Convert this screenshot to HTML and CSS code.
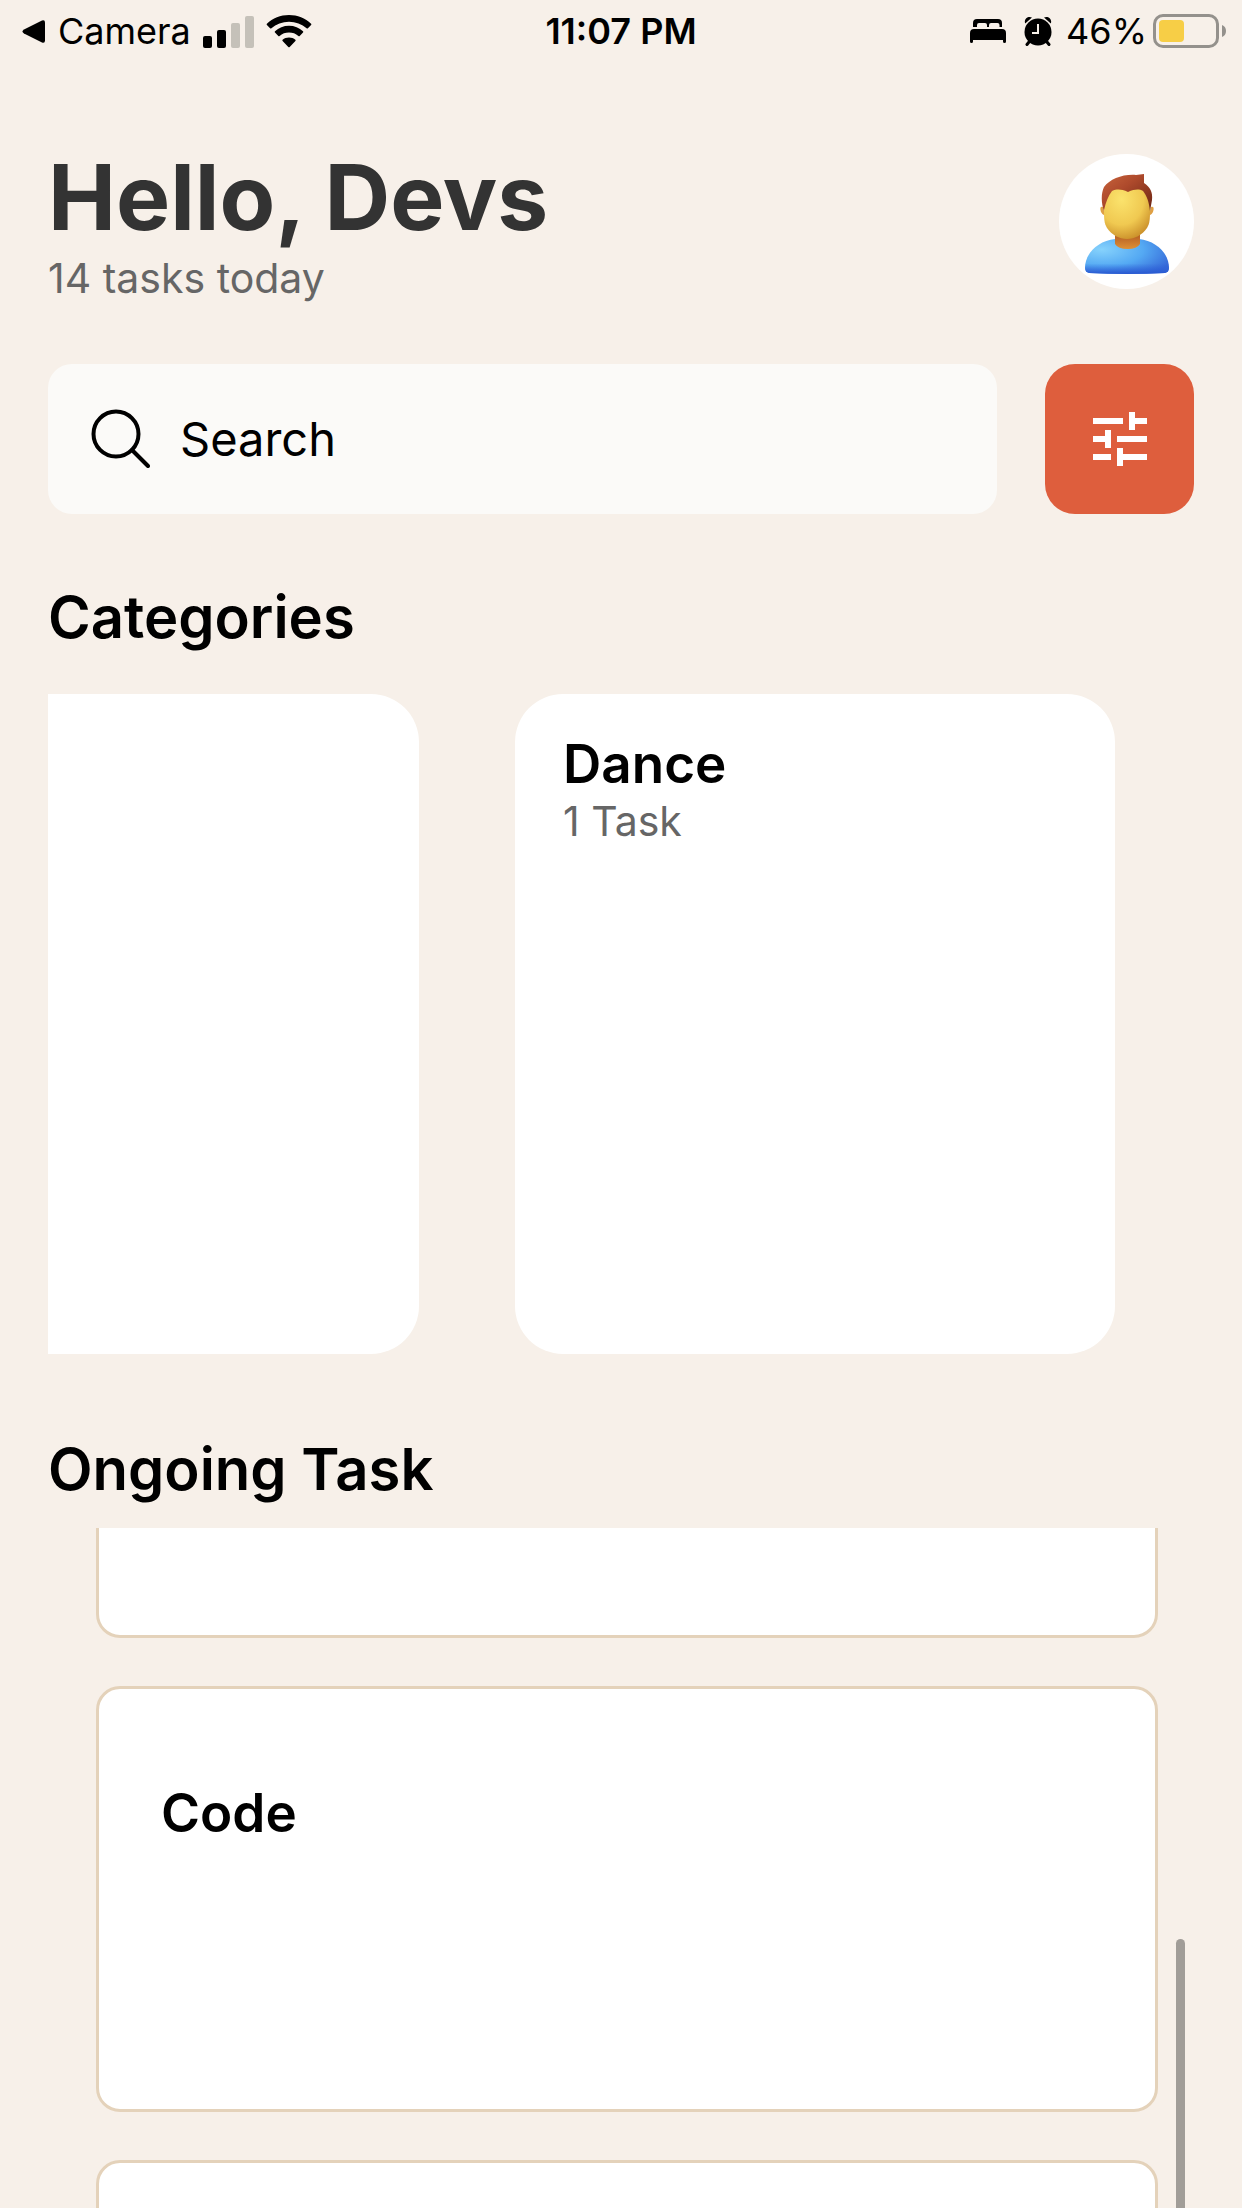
FILE: index.html
```html
<!DOCTYPE html>
<html lang="en">
<head>
<meta charset="utf-8">
<meta name="viewport" content="width=device-width, initial-scale=1">
<title>Tasks</title>
<link rel="stylesheet" href="styles.css">
</head>
<body>
<div class="app">
  <div class="status">
    <div class="status-left">
      <a class="back" href="#">
        <svg width="24" height="24" viewBox="0 0 24 24" aria-hidden="true"><path d="M2 10.500 20 1.500q3-1 3 2v18q0 3-3 2L2 14.500Q-1 12.500 2 10.500z"/></svg>
        <span>Camera</span>
      </a>
      <svg class="signal" width="52" height="33" viewBox="0 0 52 33" aria-hidden="true">
        <rect x="0" y="21" width="9" height="12" rx="2"/>
        <rect x="14" y="15" width="9" height="18" rx="2"/>
        <rect class="dim" x="28" y="8" width="9" height="25" rx="2"/>
        <rect class="dim" x="42" y="1" width="9" height="32" rx="2"/>
      </svg>
      <svg class="wifi" width="46" height="34" viewBox="0 0 46 34" aria-hidden="true">
        <path d="M23 1C14.500 1 6.700 4.300.9 9.700q-.6.600 0 1.300l3.200 3.300q.6.600 1.300 0C10.200 10 16.300 7.800 23 7.800s12.800 2.200 17.600 6.500q.7.600 1.300 0l3.200-3.300q.6-.7 0-1.300C39.300 4.300 31.500 1 23 1z"/>
        <path d="M23 11.800c-5.400 0-10.300 2-14 5.500q-.7.600 0 1.300l3.300 3.300q.6.600 1.300 0c2.600-2.200 5.800-3.400 9.400-3.400s6.800 1.200 9.400 3.400q.7.600 1.300 0l3.300-3.300q.7-.7 0-1.300C33.300 13.800 28.400 11.800 23 11.800z"/>
        <path d="M23 23.500c-2.500 0-4.700.8-6.400 2.300q-.6.600 0 1.200l5.700 6q.7.600 1.400 0l5.700-6q.6-.6 0-1.200c-1.700-1.500-3.900-2.300-6.400-2.300z"/>
      </svg>
    </div>
    <div class="time">11:07 PM</div>
    <div class="status-right">
      <svg width="36" height="26" viewBox="0 0 36 26" aria-hidden="true">
        <path d="M3 9V5q0-4 4-4h21q4 0 4 4v4h-2.500V7q0-2-2-2H21q-2 0-2 2v2h-2V7q0-2-2-2H9Q7 5 7 7v2z"/>
        <path d="M4 11h28q4 0 4 4v8.500q0 1.500-1.500 1.500T33 23.500V22H3v1.500Q3 25 1.500 25T0 23.500V15q0-4 4-4z"/>
      </svg>
      <svg class="alarm" width="28" height="30" viewBox="0 0 28 30" aria-hidden="true">
        <circle cx="14" cy="16" r="13.500"/>
        <path d="M1.200 7.500C-.5 3 4-.5 8 1.500zM26.800 7.500C28.500 3 24-.5 20 1.500z"/>
        <path class="line" d="M5 26l-2 2.500M23 26l2 2.500"/>
        <path class="hands" d="M14 8v9H8"/>
      </svg>
      <span>46%</span>
      <svg class="battery" width="75" height="34" viewBox="0 0 75 34" aria-hidden="true">
        <rect class="shell" x="1.500" y="1.500" width="63" height="31" rx="8.500"/>
        <rect class="charge" x="6" y="6" width="25" height="22" rx="4"/>
        <path class="nub" d="M69 11q4 1.500 4 6t-4 6z"/>
      </svg>
    </div>
  </div>

  <main class="content">
    <header class="greeting">
      <div>
        <h1>Hello, Devs</h1>
        <p class="sub">14 tasks today</p>
      </div>
      <div class="avatar">
        <svg width="86" height="102" viewBox="0 0 86 102" role="img" aria-label="Profile">
          <defs>
            <radialGradient id="face" cx=".38" cy=".25" r=".8"><stop offset="0" stop-color="#fbe36d"/><stop offset=".6" stop-color="#f0c951"/><stop offset="1" stop-color="#c98d28"/></radialGradient>
            <linearGradient id="hair" x1="0" y1="0" x2="1" y2="1"><stop offset="0" stop-color="#c9653c"/><stop offset=".4" stop-color="#ae4a2c"/><stop offset="1" stop-color="#692312"/></linearGradient>
            <radialGradient id="shirt" cx=".2" cy=".3" r=".9"><stop offset="0" stop-color="#86d2fc"/><stop offset=".55" stop-color="#54a9f3"/><stop offset="1" stop-color="#3568d8"/></radialGradient>
            <linearGradient id="hem" x1="0" y1="0" x2="0" y2="1"><stop offset=".7" stop-color="#2f67dc" stop-opacity="0"/><stop offset="1" stop-color="#2858d0"/></linearGradient>
            <linearGradient id="neck" x1="0" y1="0" x2="0" y2="1"><stop offset="0" stop-color="#a64d1d"/><stop offset="1" stop-color="#df9136"/></linearGradient>
          </defs>
          <path fill="url(#shirt)" d="M31 66C14 68 1 80 1 95q0 4 4 5 38 2 76 0 4-1 4-5C85 80 72 68 55 66z"/>
          <path fill="url(#hem)" d="M31 66C14 68 1 80 1 95q0 4 4 5 38 2 76 0 4-1 4-5C85 80 72 68 55 66z"/>
          <path fill="url(#neck)" d="M31 57h25v14q-3 5-12.500 5T31 71z"/>
          <path fill="#dfa044" d="M19 34q-4-1-2 5 2 4 4 3zM67 34q4-1 2 5-2 4-4 3z"/>
          <path fill="url(#face)" d="M43 13C27 13 20 21 20 36c0 9 0 14 3 19 5 7 12 11 20 11s15-4 20-11c3-5 3-10 3-19 0-15-7-23-23-23z"/>
          <path fill="url(#hair)" d="M20 38C17 30 17 20 20 14 26 6 39 1 52 2l8-1v9c6 4 9 9 8 17l-2 11c-1-9-3-15-7-20-4-2-8-2-15 1-7-3-11-3-16-1-4 5-6 11-8 19z"/>
        </svg>
      </div>
    </header>

    <form class="search-row">
      <label class="search">
        <svg width="62" height="62" viewBox="0 0 62 62" aria-hidden="true"><circle cx="28" cy="26" r="22.500"/><path d="M44 42l16 16"/></svg>
        <input type="text" placeholder="Search" aria-label="Search">
      </label>
      <button class="filter" type="button" aria-label="Filter tasks">
        <svg width="54" height="54" viewBox="0 0 54 54" aria-hidden="true"><path d="M0 6h30v6H0zM36 0h6v6h12v6H42v6h-6zM0 24h12v-6h6v18h-6v-6H0zM24 24h30v6H24zM0 42h18v6H0zM24 36h6v6h24v6H30v6h-6z"/></svg>
      </button>
    </form>

    <h2>Categories</h2>
    <div class="categories">
      <article class="category"></article>
      <article class="category">
        <h3>Dance</h3>
        <p class="sub">1 Task</p>
      </article>
    </div>

    <h2>Ongoing Task</h2>
    <div class="task-area">
      <ul class="tasks">
        <li class="task"></li>
        <li class="task"><h3>Code</h3></li>
        <li class="task"></li>
      </ul>
      <div class="scrollbar"></div>
    </div>
  </main>
</div>
</body>
</html>
```

FILE: styles.css
```css
* { box-sizing: border-box; }

body {
  margin: 0;
  background: #f7f0e9;
  color: #000;
  font-family: Inter, "Liberation Sans", sans-serif;
}

h1, h2, h3, p, ul { margin: 0; padding: 0; }
svg { display: block; flex: none; }

.app {
  display: flex;
  flex-direction: column;
  height: 100vh;
}

/* Status bar */
.status {
  display: grid;
  grid-template-columns: 1fr auto 1fr;
  align-items: center;
  padding: 0 14px 0 22px;
  height: 62px;
  font-size: 36px;
  line-height: 62px;
}
.status-left, .status-right, .back { display: flex; align-items: center; }
.back { gap: 12px; color: inherit; text-decoration: none; }
.signal { margin-left: 12px; }
.signal .dim { fill: #c5c1b9; }
.wifi { margin-left: 11px; }
.time { margin-right: 8px; font-weight: 600; }
.status-right { justify-content: flex-end; }
.alarm { margin: 0 14px 0 18px; }
.alarm .line { stroke: #000; stroke-width: 3; stroke-linecap: round; }
.alarm .hands { fill: none; stroke: #f7f0e9; stroke-width: 2; }
.battery { margin-left: 6px; }
.battery .shell { fill: none; stroke: #94918c; stroke-width: 3; }
.battery .charge { fill: #f7ce46; }
.battery .nub { fill: #94918c; }

/* Page content */
.content {
  display: flex;
  flex: 1;
  flex-direction: column;
  min-height: 0;
  padding: 82px 48px 0;
}
.greeting {
  display: flex;
  justify-content: space-between;
  align-items: flex-start;
  height: 220px;
}
h1 { color: #333; font-size: 91px; line-height: 106px; }
.sub { color: #666; font-size: 41px; line-height: 50px; }
h1 + .sub { margin-top: 3px; }
.avatar {
  display: grid;
  place-items: center;
  width: 135px;
  height: 135px;
  margin-top: 10px;
  padding-top: 4px;
  border-radius: 50%;
  background: #fff;
}

.search-row { display: flex; gap: 48px; }
.search {
  display: flex;
  flex: 1;
  align-items: center;
  gap: 30px;
  height: 150px;
  padding: 0 30px 0 40px;
  border-radius: 24px;
  background: #fbfaf8;
}
.search svg { fill: none; stroke: #000; stroke-width: 4; stroke-linecap: round; }
.search input {
  flex: 1;
  min-width: 0;
  padding: 0;
  border: 0;
  outline: 0;
  background: none;
  color: #000;
  font: 47px/60px Inter, "Liberation Sans", sans-serif;
}
.search input::placeholder { color: #000; opacity: 1; }
.filter {
  display: grid;
  place-items: center;
  width: 149px;
  height: 150px;
  padding: 0;
  border: 0;
  border-radius: 30px;
  background: #de5e3d;
}
.filter svg { fill: #fff; }

h2 { font-size: 58px; font-weight: 600; line-height: 72px; }
.search-row + h2 { margin: 67px 0 41px; }
h3 { font-size: 53px; font-weight: 600; line-height: 64px; }

/* Horizontal strip, scrolled part of the way along */
.categories {
  display: flex;
  gap: 96px;
  overflow: hidden;
}
.category {
  flex: none;
  width: 600px;
  height: 660px;
  padding: 38px 48px;
  border-radius: 48px;
  background: #fff;
}
.category:first-child { margin-left: -229px; }
.categories + h2 { margin: 79px 0 23px; }

/* Vertical task list, scrolled so its first card is cut by the top edge */
.task-area {
  position: relative;
  flex: 1;
  min-height: 0;
  overflow: hidden;
}
.tasks {
  display: flex;
  flex-direction: column;
  gap: 48px;
  padding: 0 36px 0 48px;
  list-style: none;
}
.task {
  flex: none;
  height: 426px;
  padding: 92px 62px;
  border: 3px solid #e4d2ba;
  border-radius: 24px;
  background: #fff;
}
.task:first-child { margin-top: -316px; }
.scrollbar {
  position: absolute;
  top: 411px;
  right: 9px;
  bottom: -9px;
  width: 9px;
  border-radius: 5px;
  background: #a19d98;
}
```
